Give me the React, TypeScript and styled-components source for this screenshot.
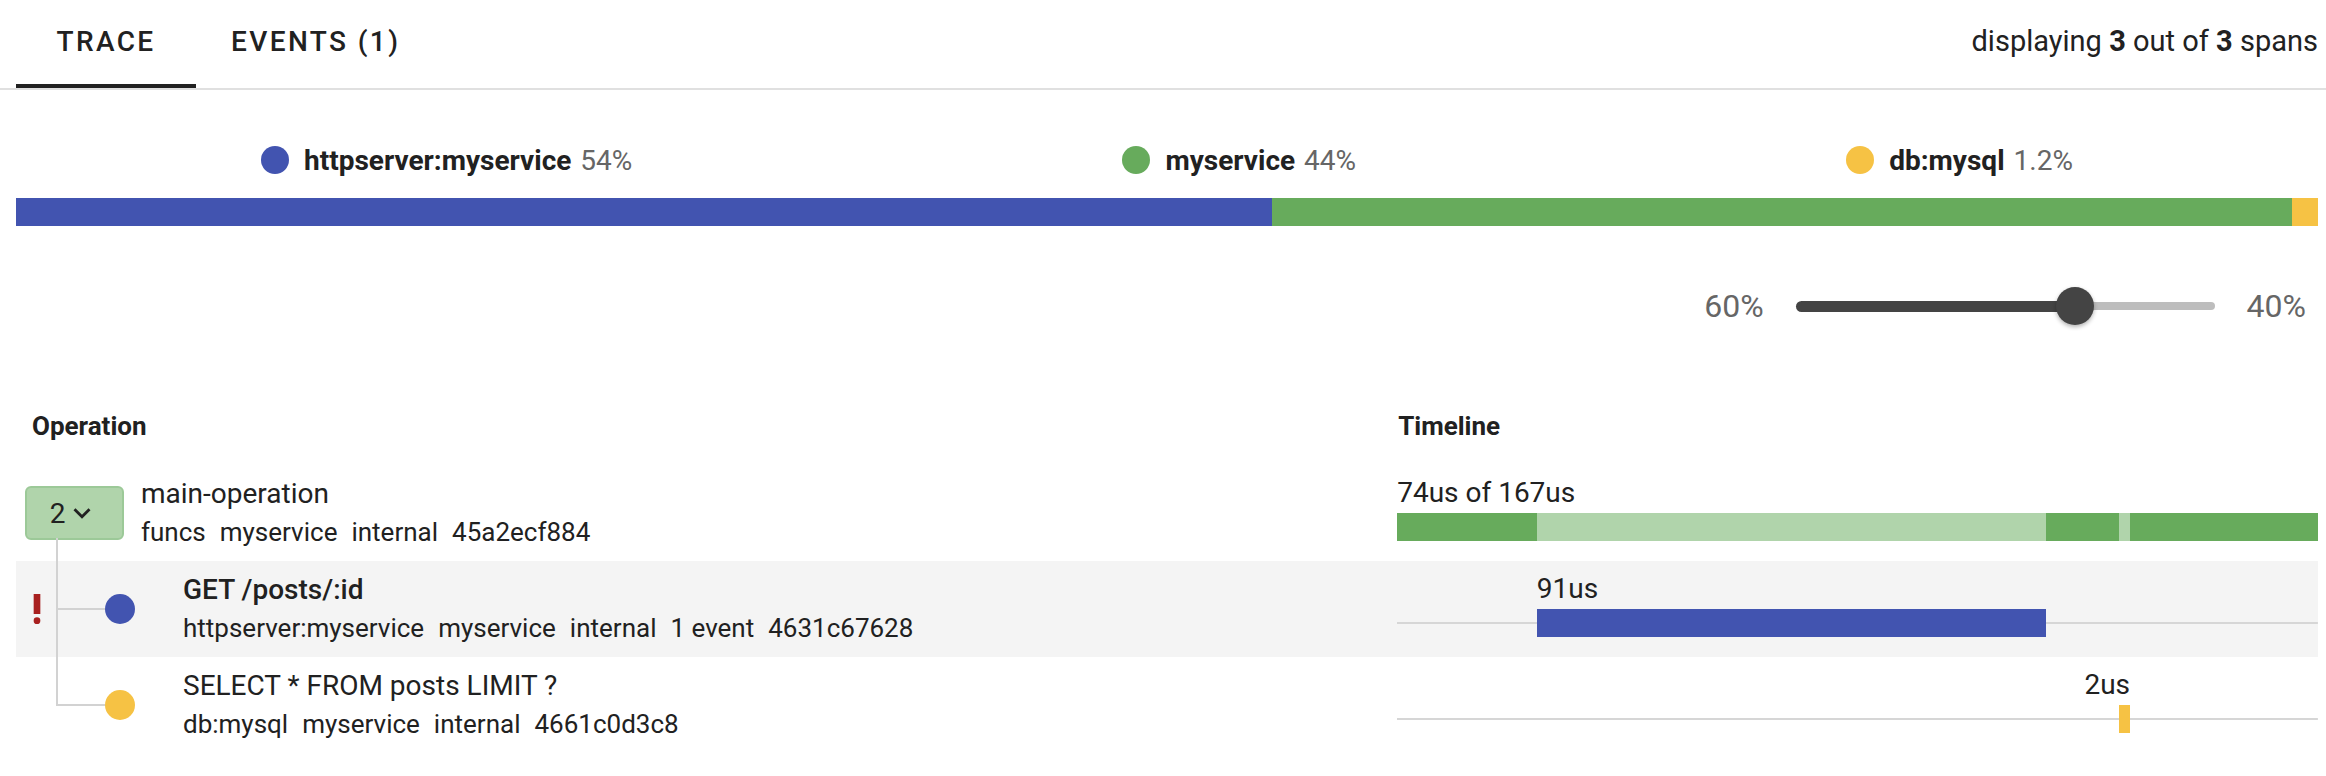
import styled, { createGlobalStyle, css } from "styled-components";

const BLUE = "#4254b0";
const GREEN = "#67ab5c";
const LIGHT_GREEN = "#b0d4ab";
const YELLOW = "#f6c244";
const TEXT = "#212121";
const MUTED = "#666666";

const GlobalStyle = createGlobalStyle`
    body {
        margin: 0;
        background: #ffffff;
        font-family: Roboto, "Liberation Sans", Arial, sans-serif;
        color: ${TEXT};
    }
`;

const services = [
    { name: "httpserver:myservice", pct: "54%", color: BLUE, weight: 54.56 },
    { name: "myservice", pct: "44%", color: GREEN, weight: 44.3 },
    { name: "db:mysql", pct: "1.2%", color: YELLOW, weight: 1.14 },
];

// child spans on the 167us timeline, as percent of its width
const childSpans = [
    { left: 15.17, width: 55.33 },
    { left: 78.4, width: 1.19 },
];

const TabBar = styled.div`
    display: flex;
    align-items: stretch;
    justify-content: space-between;
    height: 88px;
    padding: 0 8px 0 16px;
    border-bottom: 2px solid #e0e0e0;
`;

const Tabs = styled.div`
    display: flex;
`;

const Tab = styled.div<{ $active?: boolean }>`
    position: relative;
    box-sizing: border-box;
    min-width: 180px;
    padding: 0 35px 6px;
    display: flex;
    align-items: center;
    justify-content: center;
    font-size: 28px;
    font-weight: 500;
    letter-spacing: 2.4px;
    text-transform: uppercase;
    color: ${TEXT};

    ${(p) =>
        p.$active &&
        css`
            &::after {
                content: "";
                position: absolute;
                left: 0;
                right: 0;
                bottom: 0;
                height: 4px;
                background: ${TEXT};
            }
        `}
`;

const SpanCount = styled.div`
    display: flex;
    align-items: center;
    gap: 0.25em;
    padding-bottom: 6px;
    font-size: 29px;
    color: ${TEXT};

    b {
        font-weight: 700;
    }
`;

const Content = styled.div`
    padding: 0 8px 0 16px;
`;

const Legend = styled.div`
    display: flex;
    justify-content: space-around;
    align-items: center;
    height: 40px;
    margin-top: 50px;
`;

const LegendItem = styled.div`
    display: flex;
    align-items: center;
    gap: 15px;
    font-size: 28px;
`;

const Dot = styled.span<{ $color: string; $size?: number }>`
    flex: none;
    width: ${(p) => p.$size ?? 28}px;
    height: ${(p) => p.$size ?? 28}px;
    border-radius: 50%;
    background: ${(p) => p.$color};
`;

const LegendName = styled.span`
    font-weight: 700;
    color: ${TEXT};
`;

const LegendPct = styled.span`
    color: ${MUTED};
    margin-left: -6px;
`;

const OverviewBar = styled.div`
    display: flex;
    height: 28px;
    margin-top: 18px;
`;

const OverviewSegment = styled.div<{ $color: string }>`
    background: ${(p) => p.$color};
`;

const SliderRow = styled.div`
    display: flex;
    justify-content: flex-end;
    align-items: center;
    gap: 32px;
    height: 40px;
    margin-top: 60px;
    padding-right: 12px;
`;

const SliderLabel = styled.span`
    font-size: 32px;
    color: ${MUTED};
`;

const SliderTrack = styled.div`
    position: relative;
    display: flex;
    align-items: center;
    width: 419px;
    height: 40px;
`;

const SliderFill = styled.div`
    height: 11px;
    border-radius: 6px 0 0 6px;
    background: #444444;
`;

const SliderRail = styled.div`
    flex: 1;
    height: 8px;
    border-radius: 0 4px 4px 0;
    background: #bdbdbd;
`;

const SliderThumb = styled.div`
    position: absolute;
    top: 1px;
    width: 38px;
    height: 38px;
    margin-left: -19px;
    border-radius: 50%;
    background: #444444;
    box-shadow: 0 2px 4px rgba(0, 0, 0, 0.3);
`;

const TableHead = styled.div`
    display: grid;
    grid-template-columns: 60% 40%;
    margin: 84px 0 23px;
    line-height: 32px;
    font-size: 26px;
    font-weight: 700;
`;

const HeadCell = styled.div<{ $inset?: boolean }>`
    padding-left: ${(p) => (p.$inset ? 16 : 1)}px;
`;

const Row = styled.div<{ $shaded?: boolean }>`
    display: grid;
    grid-template-columns: 60% 40%;
    height: 96px;
    background: ${(p) => (p.$shaded ? "#f4f4f4" : "transparent")};
`;

const OpCell = styled.div<{ $root?: boolean }>`
    display: flex;
    align-items: center;
    padding-left: ${(p) => (p.$root ? 9 : 0)}px;
`;

const ExpandButton = styled.div`
    position: relative;
    box-sizing: border-box;
    flex: none;
    width: 99px;
    height: 54px;
    display: flex;
    align-items: center;
    justify-content: center;
    border: 2px solid #9cc998;
    border-radius: 6px;
    background: ${LIGHT_GREEN};
    font-size: 28px;
    color: ${TEXT};

    &::after {
        content: "";
        position: absolute;
        left: 29px;
        top: 100%;
        width: 2px;
        height: 23px;
        background: #d2d2d2;
    }
`;

const ErrorSlot = styled.div`
    flex: none;
    width: 41px;
    display: flex;
    justify-content: center;
`;

const Branch = styled.div<{ $last?: boolean }>`
    position: relative;
    flex: none;
    align-self: stretch;
    width: 48px;

    &::before {
        content: "";
        position: absolute;
        left: -1px;
        top: 0;
        bottom: ${(p) => (p.$last ? "calc(50% - 1px)" : "0")};
        width: 2px;
        background: #d2d2d2;
    }

    &::after {
        content: "";
        position: absolute;
        left: 0;
        right: 0;
        top: calc(50% - 1px);
        height: 2px;
        background: #d2d2d2;
    }
`;

const OpText = styled.div<{ $gap: number }>`
    margin-left: ${(p) => p.$gap}px;
    padding-bottom: 3px;
`;

const OpTitle = styled.div<{ $bold?: boolean }>`
    font-size: 28px;
    line-height: 36px;
    font-weight: ${(p) => (p.$bold ? 500 : 400)};
`;

const OpMeta = styled.div`
    display: flex;
    gap: 14px;
    margin-top: 4px;
    font-size: 26px;
    line-height: 32px;
`;

const TimeCell = styled.div`
    padding-top: 10px;
`;

const TimeLabel = styled.div`
    font-size: 28px;
    line-height: 36px;
    margin-bottom: 2px;
    white-space: nowrap;
`;

const TimeTrack = styled.div<{ $line?: boolean }>`
    display: flex;
    height: 28px;
    background: ${(p) =>
        p.$line ? "linear-gradient(#d6d6d6, #d6d6d6) center / 100% 2px no-repeat" : "none"};
`;

const TimeBar = styled.div<{ $color: string }>`
    flex: none;
    height: 100%;
    background: ${(p) => p.$color};
`;

function ChevronDown() {
    return (
        <svg width="34" height="34" viewBox="0 0 24 24" fill={TEXT}>
            <path d="M7.41 8.59 12 13.17l4.59-4.58L18 10l-6 6-6-6 1.41-1.41z" />
        </svg>
    );
}

function ErrorMark() {
    return (
        <svg width="40" height="40" viewBox="0 0 24 24" fill="#a8201f">
            <circle cx="12" cy="19" r="2" />
            <path d="M10 3h4v12h-4z" />
        </svg>
    );
}

function rootSegments() {
    const segs: { color: string; width: number }[] = [];
    let pos = 0;
    for (const c of childSpans) {
        segs.push({ color: GREEN, width: c.left - pos });
        segs.push({ color: LIGHT_GREEN, width: c.width });
        pos = c.left + c.width;
    }
    segs.push({ color: GREEN, width: 100 - pos });
    return segs;
}

interface ChildSpan {
    title: string;
    bold?: boolean;
    error?: boolean;
    color: string;
    meta: string[];
    label: string;
    left: number;
    width: number;
    alignEnd?: boolean;
    last?: boolean;
}

const children: ChildSpan[] = [
    {
        title: "GET /posts/:id",
        bold: true,
        error: true,
        color: BLUE,
        meta: ["httpserver:myservice", "myservice", "internal", "1 event", "4631c67628"],
        label: "91us",
        ...childSpans[0],
    },
    {
        title: "SELECT * FROM posts LIMIT ?",
        color: YELLOW,
        meta: ["db:mysql", "myservice", "internal", "4661c0d3c8"],
        label: "2us",
        alignEnd: true,
        last: true,
        ...childSpans[1],
    },
];

export default function App() {
    return (
        <>
            <GlobalStyle />
            <TabBar>
                <Tabs>
                    <Tab $active>Trace</Tab>
                    <Tab>Events (1)</Tab>
                </Tabs>
                <SpanCount>
                    <span>displaying</span>
                    <b>3</b>
                    <span>out of</span>
                    <b>3</b>
                    <span>spans</span>
                </SpanCount>
            </TabBar>

            <Content>
                <Legend>
                    {services.map((s) => (
                        <LegendItem key={s.name}>
                            <Dot $color={s.color} />
                            <LegendName>{s.name}</LegendName>
                            <LegendPct>{s.pct}</LegendPct>
                        </LegendItem>
                    ))}
                </Legend>

                <OverviewBar>
                    {services.map((s) => (
                        <OverviewSegment key={s.name} $color={s.color} style={{ flex: s.weight }} />
                    ))}
                </OverviewBar>

                <SliderRow>
                    <SliderLabel>60%</SliderLabel>
                    <SliderTrack>
                        <SliderFill style={{ width: "66.7%" }} />
                        <SliderRail />
                        <SliderThumb style={{ left: "66.7%" }} />
                    </SliderTrack>
                    <SliderLabel>40%</SliderLabel>
                </SliderRow>

                <TableHead>
                    <HeadCell $inset>Operation</HeadCell>
                    <HeadCell>Timeline</HeadCell>
                </TableHead>

                <Row>
                    <OpCell $root>
                        <ExpandButton>
                            2
                            <ChevronDown />
                        </ExpandButton>
                        <OpText $gap={17}>
                            <OpTitle>main-operation</OpTitle>
                            <OpMeta>
                                <span>funcs</span>
                                <span>myservice</span>
                                <span>internal</span>
                                <span>45a2ecf884</span>
                            </OpMeta>
                        </OpText>
                    </OpCell>
                    <TimeCell>
                        <TimeLabel>74us of 167us</TimeLabel>
                        <TimeTrack>
                            {rootSegments().map((seg, i) => (
                                <TimeBar key={i} $color={seg.color} style={{ width: `${seg.width}%` }} />
                            ))}
                        </TimeTrack>
                    </TimeCell>
                </Row>

                {children.map((c, i) => (
                    <Row key={c.title} $shaded={i === 0}>
                        <OpCell>
                            <ErrorSlot>{c.error && <ErrorMark />}</ErrorSlot>
                            <Branch $last={c.last} />
                            <Dot $color={c.color} $size={30} />
                            <OpText $gap={48}>
                                <OpTitle $bold={c.bold}>{c.title}</OpTitle>
                                <OpMeta>
                                    {c.meta.map((m) => (
                                        <span key={m}>{m}</span>
                                    ))}
                                </OpMeta>
                            </OpText>
                        </OpCell>
                        <TimeCell>
                            <TimeLabel
                                style={
                                    c.alignEnd
                                        ? { textAlign: "right", paddingRight: `${100 - c.left - c.width}%` }
                                        : { paddingLeft: `${c.left}%` }
                                }
                            >
                                {c.label}
                            </TimeLabel>
                            <TimeTrack $line>
                                <TimeBar
                                    $color={c.color}
                                    style={{ marginLeft: `${c.left}%`, width: `${c.width}%` }}
                                />
                            </TimeTrack>
                        </TimeCell>
                    </Row>
                ))}
            </Content>
        </>
    );
}
